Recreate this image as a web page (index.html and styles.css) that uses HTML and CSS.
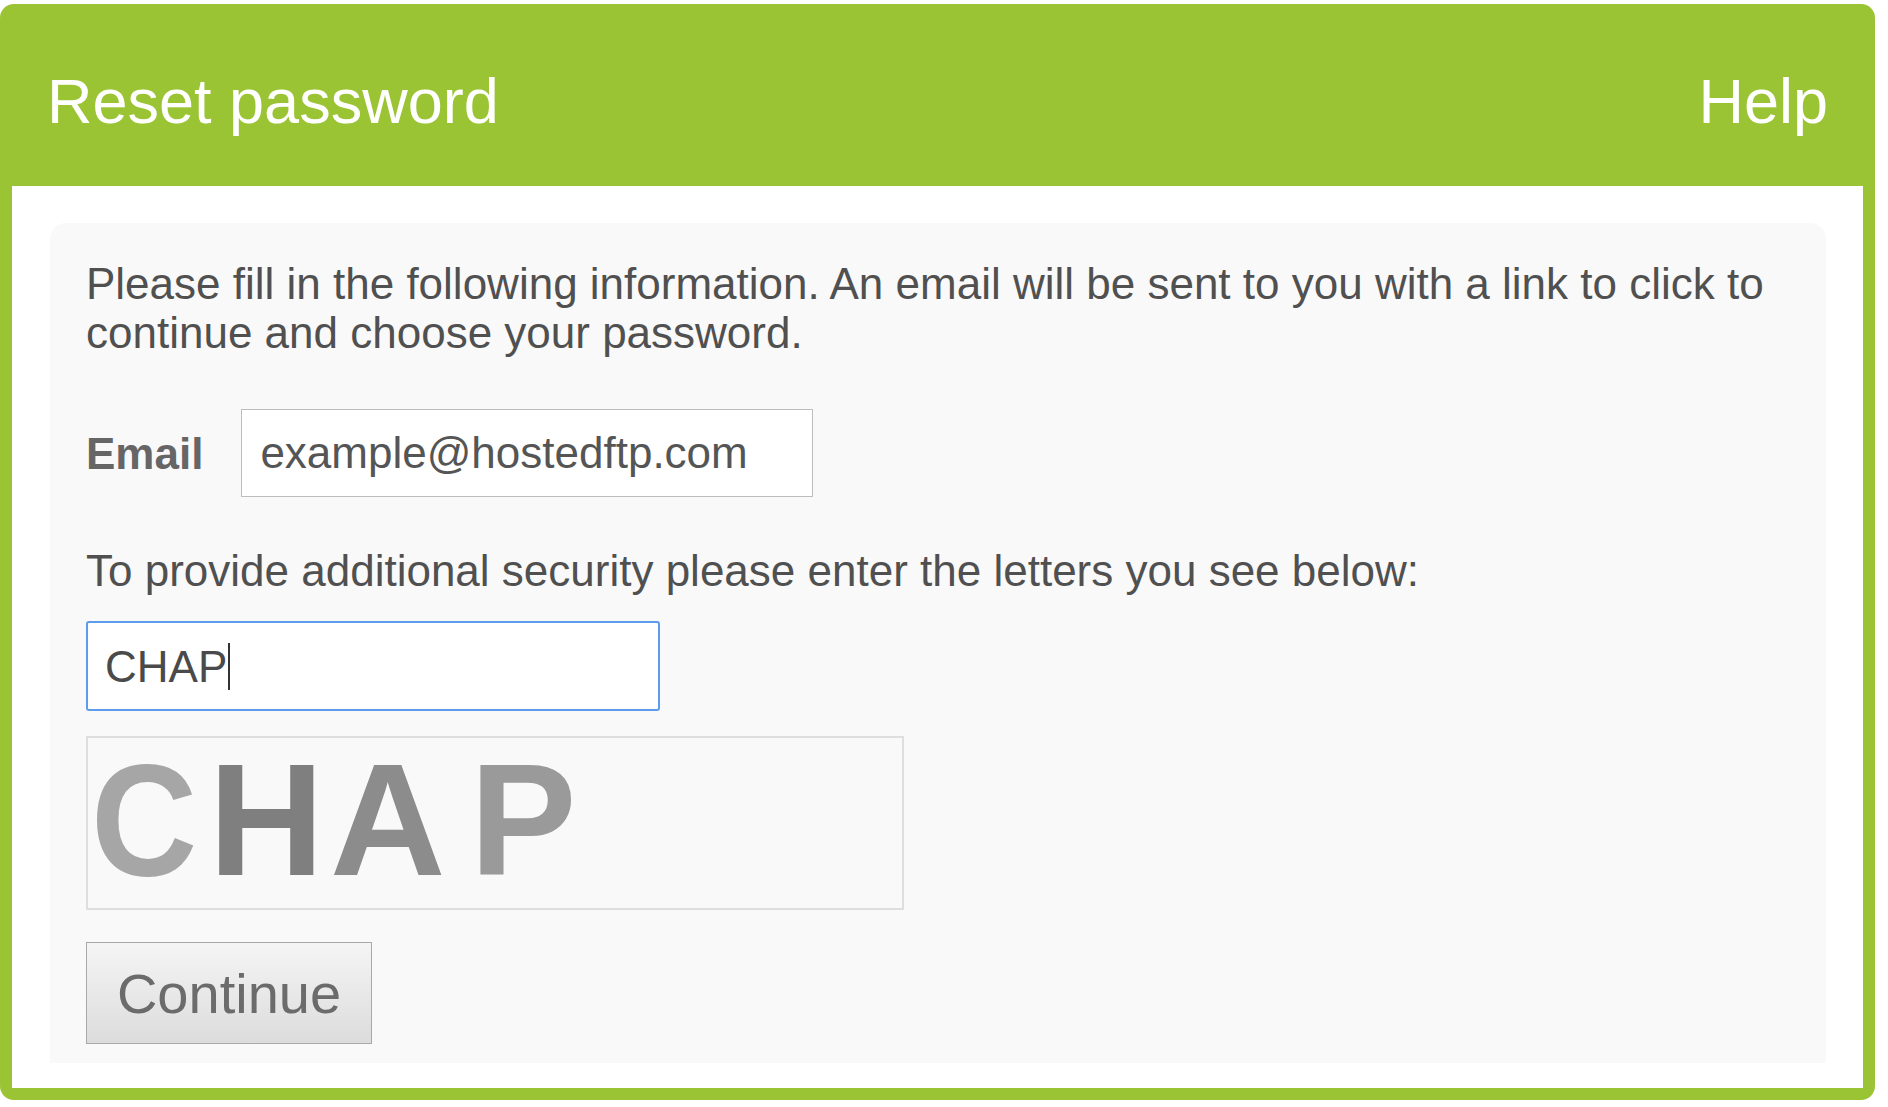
FILE: index.html
```html
<!DOCTYPE html>
<html lang="en">
<head>
<meta charset="utf-8">
<title>Reset password</title>
<link rel="stylesheet" href="styles.css">
</head>
<body>
<div class="frame">
  <header class="header">
    <h1 class="title">Reset password</h1>
    <a class="help" href="#">Help</a>
  </header>
  <main class="body">
    <section class="panel">
      <p class="intro">Please fill in the following information. An email will be sent to you with a link to click to continue and choose your password.</p>
      <div class="email-row">
        <label class="label" for="email">Email</label>
        <input class="field" id="email" type="text" value="example@hostedftp.com" readonly>
      </div>
      <p class="notice">To provide additional security please enter the letters you see below:</p>
      <div class="field field-focus" role="textbox">CHAP<span class="caret"></span></div>
      <div class="captcha" aria-label="CAPTCHA image"><span class="c1">C</span><span class="c2">H</span><span class="c3">A</span><span class="c4">P</span></div>
      <button class="btn" type="button">Continue</button>
    </section>
  </main>
</div>
</body>
</html>
```
FILE: styles.css
```css
html, body {
  margin: 0;
  padding: 0;
  background: #ffffff;
}

body {
  padding-top: 4px;
  font-family: "Liberation Sans", Arial, sans-serif;
}

.frame {
  width: 1875px;
  height: 1096px;
  box-sizing: border-box;
  background: #9ac434;
  border-radius: 14px;
  padding: 0 12px 12px;
  display: flex;
  flex-direction: column;
}

.header {
  height: 182px;
  box-sizing: border-box;
  padding: 62px 35px 0 35px;
  display: flex;
  justify-content: space-between;
  align-items: flex-start;
  flex-shrink: 0;
}

.title,
.help {
  margin: 0;
  font-size: 63px;
  line-height: 70px;
  font-weight: normal;
  color: #ffffff;
  text-decoration: none;
}

.body {
  flex: 1;
  background: #ffffff;
  padding: 37px 37px 0 38px;
  box-sizing: border-box;
}

.panel {
  background: #f9f9f9;
  border-radius: 16px 16px 0 0;
  padding: 36px 36px 19px;
  color: #505050;
  font-size: 44px;
  line-height: 49px;
}

.intro {
  margin: 0;
}

.email-row {
  margin-top: 52px;
  display: flex;
  align-items: center;
}

.label {
  font-weight: bold;
  color: #666666;
  margin-right: 38px;
}

.field {
  box-sizing: border-box;
  width: 572px;
  height: 88px;
  border: 1px solid #bdbdbd;
  background: #ffffff;
  padding: 0 18px;
  font-family: "Liberation Sans", Arial, sans-serif;
  font-size: 44px;
  color: #555555;
  outline: none;
  margin: 0;
}

.notice {
  margin: 49px 0 0;
}

.field-focus {
  margin-top: 26px;
  width: 574px;
  height: 90px;
  border: 2px solid #5d9cec;
  border-radius: 3px;
  padding: 0 17px;
  display: flex;
  align-items: center;
  color: #4a4a4a;
}

.caret {
  display: inline-block;
  width: 2px;
  height: 47px;
  background: #333333;
  margin-left: 1px;
}

.captcha {
  margin-top: 25px;
  width: 818px;
  height: 174px;
  box-sizing: border-box;
  border: 2px solid #dedede;
  padding: 22px 0 0 3px;
  font-weight: bold;
  font-size: 160px;
  line-height: 120px;
  white-space: nowrap;
}

.captcha span {
  display: inline-block;
  line-height: 120px;
}

.c1 {
  color: #a6a6a6;
  margin-right: 2px;
  transform: scaleX(0.92);
  transform-origin: left center;
}

.c2 {
  color: #7f7f7f;
  margin-right: 6px;
}

.c3 {
  color: #8c8c8c;
  margin-right: 24px;
}

.c4 {
  color: #9a9a9a;
}

.btn {
  display: block;
  margin-top: 32px;
  width: 286px;
  height: 102px;
  box-sizing: border-box;
  border: 1px solid #a9a9a9;
  background: linear-gradient(#f5f5f5, #dcdcdc);
  font-family: "Liberation Sans", Arial, sans-serif;
  font-size: 56px;
  color: #6b6b6b;
  padding: 0;
}
```
